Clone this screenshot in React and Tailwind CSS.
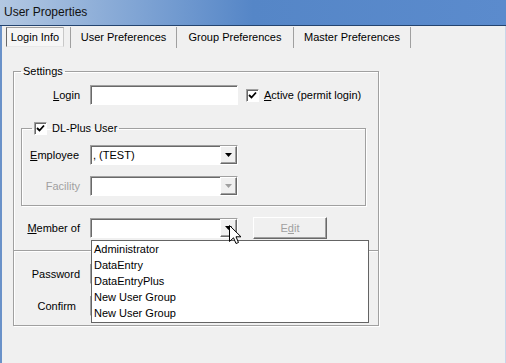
import React from 'react';

const SUNKEN = 'border border-[#a0a0a0] border-b-white border-r-white shadow-[inset_1px_1px_0_#696969]';
const RAISED = 'border border-white border-b-[#696969] border-r-[#696969] shadow-[inset_-1px_-1px_0_#a0a0a0]';

const Check = ({ checked = true }) => (
    <span className={`w-[13px] h-[13px] bg-white ${SUNKEN} flex items-center justify-center shrink-0`}>
        {checked && (
            <svg width="9" height="9" viewBox="0 0 9 9">
                <path d="M1 4 L3.5 6.5 L8 1.5" fill="none" stroke="#000" strokeWidth="1.8" />
            </svg>
        )}
    </span>
);

// width passed in full so tailwind can see it
const Label = ({ children, width = 'w-[66px]', className = '' }) => (
    <div className={`${width} text-right shrink-0 ${className}`}>{children}</div>
);

const Combo = ({ value = '', disabled = false }) => (
    <div className={`w-[148px] h-[20px] bg-white ${SUNKEN} flex items-stretch`}>
        <div className="flex-1 pl-[2px] flex items-center">{value}</div>
        <div className={`w-[17px] bg-[#f0f0f0] ${RAISED} flex items-center justify-center`}>
            <svg width="7" height="4" viewBox="0 0 7 4">
                <path d="M0 0 H7 L3.5 4 Z" fill={disabled ? '#a0a0a0' : '#000'} />
            </svg>
        </div>
    </div>
);

const Input = () => <div className={`w-[148px] h-[20px] bg-white ${SUNKEN}`} />;

const TABS = [
    { label: 'User Preferences', width: 'w-[106px]' },
    { label: 'Group Preferences', width: 'w-[117px]' },
    { label: 'Master Preferences', width: 'w-[117px]' },
];

const GROUPS = ['Administrator', 'DataEntry', 'DataEntryPlus', 'New User Group', 'New User Group'];

export default function App() {
    return (
        <div
            className="relative w-[506px] h-[363px] overflow-hidden bg-[#f0f0f0] text-[11px] leading-[13px] text-black flex flex-col"
            style={{ fontFamily: '"Liberation Sans", Arial, sans-serif' }}
        >
            {/* Title bar */}
            <div className="h-[26px] shrink-0 bg-gradient-to-r from-[#b3c8e2] via-[#5586c7] to-[#5b8bcd] border-b border-[#24446f] flex items-center pl-[4px]">
                <span className="text-[12px] text-[#111]">User Properties</span>
            </div>

            <div className="flex-1 flex flex-col border-l-2 border-l-[#6a92c9] border-r border-r-[#c8d6ea]">
                {/* Tabs */}
                <div className="flex h-[21px] mt-[1px] shrink-0">
                    <div className="w-[69px] border-r border-[#a0a0a0] flex">
                        <div className="ml-[4px] w-[58px] h-[20px] bg-[#f6f6f6] border border-[#a0a0a0] border-l-[#696969] border-r-[#c8c8c8] border-b-[#e8e8e8] flex items-center justify-center">
                            Login Info
                        </div>
                    </div>
                    {TABS.map((t) => (
                        <div key={t.label} className={`${t.width} border-r border-[#a0a0a0] flex items-center justify-center pb-[1px]`}>
                            {t.label}
                        </div>
                    ))}
                </div>

                {/* Settings */}
                <fieldset className="mt-[17px] ml-[11px] w-[366px] h-[261px] shrink-0 border border-[#a0a0a0] shadow-[1px_1px_0_#fff,inset_1px_1px_0_#fff]">
                    <legend className="ml-[7px] px-[2px]">Settings</legend>

                    <div className="flex items-center h-[20px] mt-[7px]">
                        <Label><span className="underline">L</span>ogin</Label>
                        <div className="ml-[10px]"><Input /></div>
                        <div className="ml-[8px]"><Check /></div>
                        <span className="ml-[5px]"><span className="underline">A</span>ctive (permit login)</span>
                    </div>

                    <fieldset className="mt-[17px] ml-[7px] w-[345px] border border-[#a0a0a0] shadow-[1px_1px_0_#fff,inset_1px_1px_0_#fff] pb-[9px]">
                        <legend className="ml-[10px] px-[2px] flex items-center gap-[5px]">
                            <Check />
                            <span>DL-Plus User</span>
                        </legend>
                        <div className="flex items-center h-[20px] mt-[10px]">
                            <Label width="w-[57px]"><span className="underline">E</span>mployee</Label>
                            <div className="ml-[11px]"><Combo value=", (TEST)" /></div>
                        </div>
                        <div className="flex items-center h-[20px] mt-[11px]">
                            <Label width="w-[58px]" className="text-[#a0a0a0]">Facility</Label>
                            <div className="ml-[10px]"><Combo disabled /></div>
                        </div>
                    </fieldset>

                    <div className="flex items-center h-[20px] mt-[12px]">
                        <Label><span className="underline">M</span>ember of</Label>
                        <div className="ml-[10px]"><Combo /></div>
                        <div className={`ml-[15px] w-[74px] h-[22px] bg-[#f0f0f0] ${RAISED} flex items-center justify-center text-[#a0a0a0]`}>
                            E<span className="underline">d</span>it
                        </div>
                    </div>

                    <div className="mt-[12px] h-[2px] border-t border-[#a0a0a0] border-b border-b-white" />

                    <div className="flex items-center h-[20px] mt-[12px]">
                        <Label>Password</Label>
                        <div className="ml-[10px]"><Input /></div>
                    </div>
                    <div className="flex items-center h-[20px] mt-[12px]">
                        <Label className="pr-[4px]">Confirm</Label>
                        <div className="ml-[10px]"><Input /></div>
                    </div>
                </fieldset>
            </div>

            {/* Open dropdown list */}
            <div className="absolute left-[91px] top-[240px] w-[278px] h-[83px] bg-white border border-[#646464] flex flex-col">
                {GROUPS.map((g, i) => (
                    <div key={i} className="h-[16px] pl-[2px] flex items-center">{g}</div>
                ))}
            </div>

            {/* Mouse cursor */}
            <svg className="absolute left-[229px] top-[225px]" width="13" height="20" viewBox="0 0 13 20">
                <path d="M0.5 0.5 L0.5 16.5 L4.5 12.8 L7 18.5 L9.5 17.5 L7 11.8 L12 11.8 Z" fill="#fff" stroke="#000" strokeWidth="1" strokeLinejoin="round" />
            </svg>
        </div>
    );
}
